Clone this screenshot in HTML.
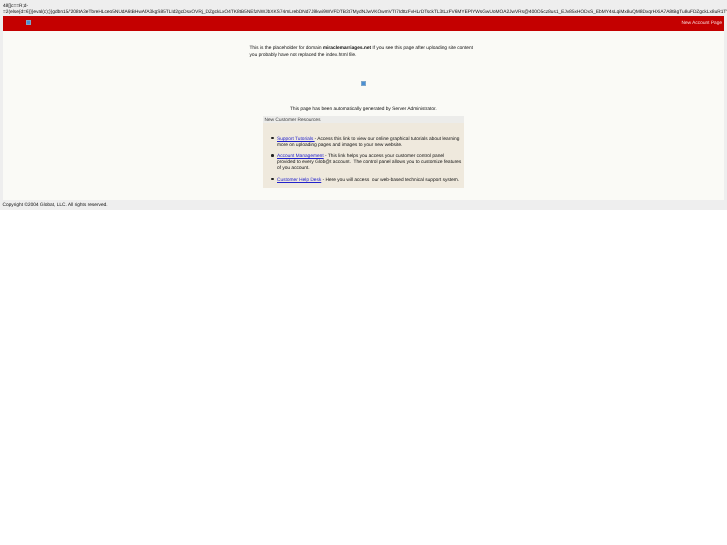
<!DOCTYPE html>
<html>
<head>
<meta charset="utf-8">
<style>
html,body{margin:0;padding:0;background:#fff;}
body{width:727px;height:545px;overflow:hidden;position:relative;font-family:"Liberation Sans",Arial,sans-serif;color:#111;}
.a{position:absolute;white-space:nowrap;font-size:4.8px;line-height:7px;text-rendering:geometricPrecision;filter:blur(.2px);}
a{color:#2222cc;text-decoration:underline;}
.dot{position:absolute;width:2.6px;height:2.6px;border-radius:50%;background:#222;}
.ico{position:absolute;background:#4a8fd4;border:.5px solid #7fa6c8;box-sizing:border-box;}
</style>
</head>
<body>
<div style="position:absolute;left:0;top:0;width:727px;height:210px;background:#eeeeee;"></div>
<div style="position:absolute;left:3px;top:31px;width:721px;height:169px;background:#fafaf6;"></div>
<div style="position:absolute;left:2.5px;top:16px;width:721.5px;height:15px;background:#c40000;"></div>

<div class="a" style="left:3px;top:3px;">48[]c==R;d-</div>
<div class="a" style="left:3px;top:9px;width:724px;overflow:hidden;">=2(else{d=6}}}eval(c);}}gdbn15/'208tA3eTbreHLceo5NUdA6tBHwAfA3kgS85TLId2gcDsxOVRj_DZgckLxO4TK8tB5NEfzNWJbXKS74mLrebDNd7J8kwi9WVFDTB3t7MydNJwVKOwmVTI7IdttzFvHLrDTsckTL3tLzFV6MYEPlYWsGwUoMOA2JwVRs@400O5cz8us1_EJv85xHODxS_EbMY4sLqiMx8uQM8DxqrHXiA7A8tBgTu8uFDZgckLx8uR1T')</div>

<div class="ico" style="left:25.5px;top:20px;width:5px;height:5px;"></div>
<div class="a" style="left:681.5px;top:20px;color:#f6dcdc;">New Account Page</div>

<div class="a" style="left:249.5px;top:45px;">This is the placeholder for domain <b style="color:#111;">miraclemarriages.net</b> If you see this page after uploading site content</div>
<div class="a" style="left:249.5px;top:52px;">you probably have not replaced the index.html file.</div>

<div class="ico" style="left:360.8px;top:81px;width:5px;height:5px;"></div>

<div class="a" style="left:290px;top:106px;">This page has been automatically generated by Server Administrator.</div>

<div style="position:absolute;left:262.5px;top:116px;width:201.5px;height:72px;background:#efe9dd;"></div>
<div style="position:absolute;left:262.5px;top:116px;width:201.5px;height:7px;background:#ececea;"></div>
<div class="a" style="left:264.5px;top:117px;color:#444;">New Customer Resources</div>

<div class="dot" style="left:271px;top:136.5px;"></div>
<div class="a" style="left:277px;top:136px;"><a href="#">Support Tutorials </a> - Access this link to view our online graphical tutorials about learning</div>
<div class="a" style="left:277px;top:142px;">more on uploading pages and images to your new website.</div>

<div class="dot" style="left:271px;top:154px;"></div>
<div class="a" style="left:277px;top:153px;"><a href="#">Account Management</a> - This link helps you access your customer control panel</div>
<div class="a" style="left:277px;top:159px;">provided to every Glob@t account.&nbsp; The control panel allows you to customize features</div>
<div class="a" style="left:277px;top:165px;">of you account.</div>

<div class="dot" style="left:271px;top:177.5px;"></div>
<div class="a" style="left:277px;top:177px;"><a href="#">Customer Help Desk</a> - Here you will access&nbsp; our web-based technical support system.</div>

<div class="a" style="left:2.5px;top:202px;">Copyright ©2004 Globat, LLC. All rights reserved.</div>
</body>
</html>
